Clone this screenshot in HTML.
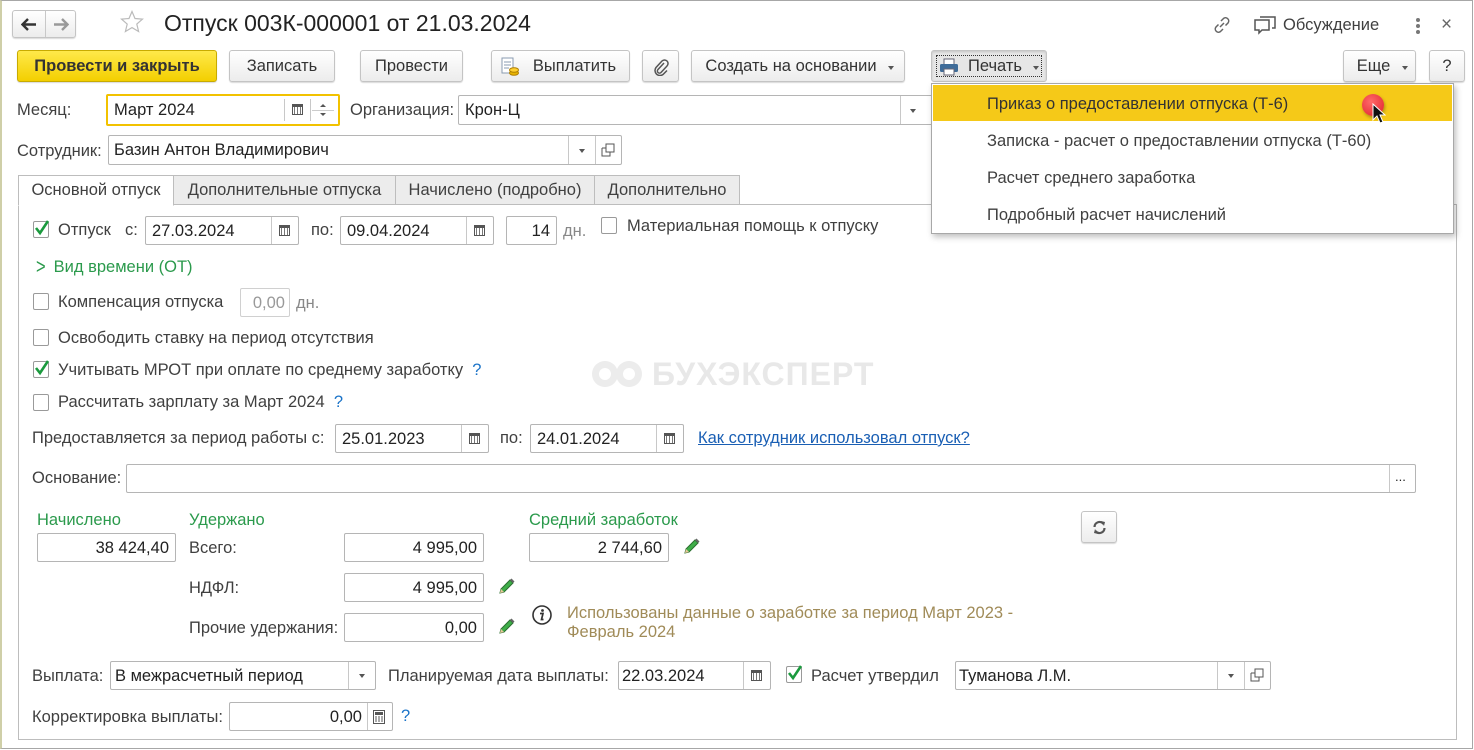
<!DOCTYPE html>
<html><head><meta charset="utf-8">
<style>
*{box-sizing:border-box;margin:0;padding:0}
body{width:1474px;height:750px;overflow:hidden;background:#fff;font-family:"Liberation Sans",Arial,sans-serif;font-size:16.5px;color:#404040;position:relative}
.a{position:absolute;white-space:nowrap;line-height:20px}
.f{position:absolute;border:1px solid #b5b5b5;border-radius:2px;background:#fff;font-size:16.5px;color:#222;line-height:28px;padding:0 6px;white-space:nowrap;overflow:hidden}
.r{text-align:right}
.btn{position:absolute;height:32px;border:1px solid #c4c4c4;border-radius:3px;background:linear-gradient(#fff,#ececec);box-shadow:0 1px 1px rgba(0,0,0,.15);text-align:center;line-height:31px;font-size:16.5px;color:#333;white-space:nowrap}
.sep{position:absolute;top:0;bottom:0;width:1px;background:#c8c8c8}
.cb{position:absolute;width:16px;height:17px;border:1px solid #9a9a9a;border-radius:2px;background:#fff}
.tri{position:absolute;width:0;height:0;border-left:3px solid transparent;border-right:3px solid transparent;border-top:4px solid #555}
.g{color:#2b9a4c}
.cal{position:absolute;width:11px;height:11px;border:1.5px solid #555;border-top-width:3px;background:repeating-linear-gradient(90deg,#fff 0 1px,#777 1px 2px,#fff 2px 3px)}
.tab{position:absolute;top:175px;height:30px;border:1px solid #bdbdbd;background:#ececec;line-height:29px;text-align:center;font-size:16.5px;color:#404040}
.q{color:#1a73c8}
</style></head><body>
<div style="position:absolute;left:0;top:0;width:1473px;height:749px;border:1px solid #a7a7a7;border-left:2px solid #cfcfa8"></div>

<div class="btn" style="left:12px;top:10px;width:64px;height:28px">
 <div class="sep" style="left:32px"></div>
 <svg style="position:absolute;left:8px;top:7px" width="16" height="13"><path d="M1 6.5h14M7 1L1.5 6.5 7 12" stroke="#333" stroke-width="2.4" fill="none"/></svg>
 <svg style="position:absolute;left:40px;top:7px" width="16" height="13"><path d="M1 6.5h14M9 1l5.5 5.5L9 12" stroke="#999" stroke-width="2.4" fill="none"/></svg>
</div>
<svg style="position:absolute;left:120px;top:10px" width="24" height="24"><path d="M12 1.5l3 7 7.5.6-5.7 5 1.8 7.4L12 17.6l-6.6 3.9 1.8-7.4-5.7-5 7.5-.6z" fill="none" stroke="#bbb" stroke-width="1.2"/></svg>
<div class="a" style="left:164px;top:9px;font-size:23px;line-height:28px;color:#222">Отпуск 003К-000001 от 21.03.2024</div>

<svg style="position:absolute;left:1211px;top:14px" width="22" height="22"><g fill="none" stroke="#666" stroke-width="1.5"><path d="M9 13l4-4"/><path d="M10 7l2.5-2.5a3.2 3.2 0 0 1 4.5 4.5L14.5 11.5"/><path d="M12 15l-2.5 2.5a3.2 3.2 0 0 1-4.5-4.5L7.5 10.5"/></g></svg>
<svg style="position:absolute;left:1253px;top:13px" width="24" height="22"><g fill="none" stroke="#555" stroke-width="1.5"><path d="M7 4h15v11h-3"/><path d="M2 7h14v10H9l-3 3v-3H2z" fill="#fff"/></g></svg>
<div class="a" style="left:1283px;top:15px;color:#404040">Обсуждение</div>
<div style="position:absolute;left:1416px;top:18px;width:4px;height:4px;border-radius:2px;background:#777;box-shadow:0 6px 0 #777,0 12px 0 #777"></div>
<div class="a" style="left:1441px;top:15px;font-size:19px;color:#666">×</div>

<div class="btn" style="left:17px;top:50px;width:200px;background:linear-gradient(#ffe94a,#f3cf00);border-color:#c8ab00;font-weight:bold;color:#333">Провести и закрыть</div>
<div class="btn" style="left:229px;top:50px;width:106px">Записать</div>
<div class="btn" style="left:360px;top:50px;width:103px">Провести</div>
<div class="btn" style="left:491px;top:50px;width:139px;padding-left:28px">Выплатить
 <svg style="position:absolute;left:9px;top:6px" width="18" height="20"><rect x="1" y="1" width="11" height="15" fill="#fff" stroke="#8a9bb0"/><path d="M3 5h7M3 8h7M3 11h5" stroke="#8a9bb0"/><ellipse cx="13" cy="16" rx="4.5" ry="2.3" fill="#e8b400" stroke="#b07f00"/><ellipse cx="13" cy="13" rx="4.5" ry="2.3" fill="#ffd030" stroke="#b07f00"/></svg></div>
<div class="btn" style="left:642px;top:50px;width:37px">
 <svg style="position:absolute;left:10px;top:7px" width="16" height="18"><path d="M11 5L5 11.5a2 2 0 0 0 3 3L14 8a3.5 3.5 0 0 0-5-5L3 9.5a5 5 0 0 0 7 7l4-4" fill="none" stroke="#555" stroke-width="1.5"/></svg></div>
<div class="btn" style="left:691px;top:50px;width:214px;padding-right:14px">Создать на основании<div class="tri" style="left:196px;top:15px"></div></div>
<div class="btn" style="left:931px;top:50px;width:116px;background:#e6e6e6;box-shadow:inset 0 1px 2px rgba(0,0,0,.15);padding-left:22px;padding-right:10px">
 <div style="position:absolute;left:4px;top:4px;right:4px;bottom:4px;border:1px dotted #333"></div>Печать<div class="tri" style="left:101px;top:15px"></div>
 <svg style="position:absolute;left:7px;top:7px" width="20" height="18"><rect x="5" y="1" width="10" height="6" fill="#fff" stroke="#667"/><rect x="1" y="6" width="18" height="8" rx="1.5" fill="#3f6c99"/><rect x="5" y="11" width="10" height="6" fill="#fff" stroke="#667"/></svg></div>
<div class="btn" style="left:1343px;top:50px;width:73px;padding-right:12px">Еще<div class="tri" style="left:58px;top:15px"></div></div>
<div class="btn" style="left:1429px;top:50px;width:36px">?</div>

<div class="a" style="left:17px;top:100px">Месяц:</div>
<div class="f" style="left:106px;top:94px;width:234px;height:32px;border:2px solid #f2c200;line-height:28px">Март 2024
 <div class="sep" style="left:176px;top:3px;bottom:3px"></div><div class="cal" style="left:184px;top:8px"></div>
 <div class="sep" style="left:202px;top:3px;bottom:3px"></div>
 <div class="tri" style="left:212px;top:8px;border-top:none;border-bottom:3px solid #555"></div><div class="tri" style="left:212px;top:17px;border-top-width:3px"></div>
 <div style="position:absolute;left:204px;right:4px;top:14px;height:1px;background:#ccc"></div></div>
<div class="a" style="left:350px;top:100px">Организация:</div>
<div class="f" style="left:458px;top:95px;width:480px;height:30px">Крон-Ц<div class="sep" style="left:441px"></div><div class="tri" style="left:451px;top:13px"></div></div>

<div class="a" style="left:17px;top:141px">Сотрудник:</div>
<div class="f" style="left:108px;top:135px;width:514px;height:30px;padding-left:5px">Базин Антон Владимирович<div class="sep" style="left:459px"></div><div class="tri" style="left:470px;top:13px"></div><div class="sep" style="left:486px"></div>
 <svg style="position:absolute;left:492px;top:7px" width="14" height="14"><path d="M5 1h8v8H5z" fill="#fff" stroke="#555"/><path d="M1 5h4M1 5v8h8V9" fill="none" stroke="#555"/></svg></div>

<div style="position:absolute;left:18px;top:204px;width:1439px;height:536px;border:1px solid #bdbdbd"></div>
<div class="tab" style="left:18px;width:156px;background:#fff;border-bottom-color:#fff;height:31px">Основной отпуск</div>
<div class="tab" style="left:173px;width:223px">Дополнительные отпуска</div>
<div class="tab" style="left:395px;width:200px">Начислено (подробно)</div>
<div class="tab" style="left:594px;width:146px">Дополнительно</div>

<svg style="position:absolute;left:588px;top:357px" width="60" height="34"><g fill="#ececec"><circle cx="17" cy="17" r="13"/><circle cx="41" cy="17" r="13"/></g><g fill="#fff"><circle cx="17" cy="17" r="6"/><circle cx="41" cy="17" r="6"/></g></svg>
<div class="a" style="left:652px;top:357px;font-size:32px;line-height:34px;font-weight:bold;color:#e8e8e8;letter-spacing:1px">БУХЭКСПЕРТ</div>

<svg width="0" height="0" style="position:absolute"><defs><path id="ck" d="M3 9l4 5 8-12" fill="none" stroke="#1b9a3e" stroke-width="2.6"/></defs></svg>
<div class="cb" style="left:33px;top:221px"><svg width="18" height="18" style="position:absolute;left:-1px;top:-3px"><use href="#ck"/></svg></div>
<div class="a" style="left:58px;top:220px">Отпуск</div><div class="a" style="left:125px;top:220px">с:</div>
<div class="f" style="left:145px;top:216px;width:154px;height:29px">27.03.2024<div class="sep" style="left:125px"></div><div class="cal" style="left:133px;top:8px"></div></div>
<div class="a" style="left:311px;top:220px">по:</div>
<div class="f" style="left:340px;top:216px;width:154px;height:29px">09.04.2024<div class="sep" style="left:125px"></div><div class="cal" style="left:133px;top:8px"></div></div>
<div class="f r" style="left:506px;top:216px;width:51px;height:29px">14</div>
<div class="a" style="left:563px;top:221px;color:#888">дн.</div>
<div class="cb" style="left:601px;top:217px"></div>
<div class="a" style="left:627px;top:216px">Материальная помощь к отпуску</div>

<div class="a g" style="left:36px;top:257px"><span style="display:inline-block;transform:scaleY(1.3);margin-right:8px">&gt;</span>Вид времени (ОТ)</div>

<div class="cb" style="left:33px;top:293px"></div>
<div class="a" style="left:58px;top:292px">Компенсация отпуска</div>
<div class="f r" style="left:240px;top:288px;width:50px;height:29px;color:#999;border-color:#d0d0d0;padding-right:4px">0,00</div>
<div class="a" style="left:296px;top:293px;color:#888">дн.</div>

<div class="cb" style="left:33px;top:329px"></div>
<div class="a" style="left:58px;top:328px">Освободить ставку на период отсутствия</div>
<div class="cb" style="left:33px;top:361px"><svg width="18" height="18" style="position:absolute;left:-1px;top:-3px"><use href="#ck"/></svg></div>
<div class="a" style="left:58px;top:360px">Учитывать МРОТ при оплате по среднему заработку <span class="q">&nbsp;?</span></div>
<div class="cb" style="left:33px;top:394px"></div>
<div class="a" style="left:58px;top:392px">Рассчитать зарплату за Март 2024 <span class="q">&nbsp;?</span></div>

<div class="a" style="left:32px;top:428px">Предоставляется за период работы с:</div>
<div class="f" style="left:335px;top:424px;width:154px;height:29px">25.01.2023<div class="sep" style="left:125px"></div><div class="cal" style="left:133px;top:8px"></div></div>
<div class="a" style="left:500px;top:428px">по:</div>
<div class="f" style="left:530px;top:424px;width:154px;height:29px">24.01.2024<div class="sep" style="left:125px"></div><div class="cal" style="left:133px;top:8px"></div></div>
<div class="a" style="left:698px;top:428px;color:#1a5fb4;text-decoration:underline">Как сотрудник использовал отпуск?</div>

<div class="a" style="left:32px;top:468px">Основание:</div>
<div class="f" style="left:126px;top:464px;width:1290px;height:29px"><div class="sep" style="left:1262px"></div><div class="a" style="left:1268px;top:2px;font-size:13px">...</div></div>

<div class="a g" style="left:37px;top:510px">Начислено</div>
<div class="a g" style="left:189px;top:510px">Удержано</div>
<div class="a g" style="left:529px;top:510px">Средний заработок</div>
<div class="f r" style="left:37px;top:533px;width:139px;height:29px">38 424,40</div>
<div class="a" style="left:189px;top:538px">Всего:</div>
<div class="f r" style="left:344px;top:533px;width:140px;height:29px">4 995,00</div>
<div class="f r" style="left:529px;top:533px;width:140px;height:29px">2 744,60</div>
<div class="a" style="left:189px;top:578px">НДФЛ:</div>
<div class="f r" style="left:344px;top:573px;width:140px;height:29px">4 995,00</div>
<div class="a" style="left:189px;top:618px">Прочие удержания:</div>
<div class="f r" style="left:344px;top:613px;width:140px;height:29px">0,00</div>
<svg width="0" height="0" style="position:absolute"><defs><g id="pn"><path d="M13 2l3 3-9 9-4 1 1-4z" fill="#3fae49" stroke="#2a6e2f"/><path d="M13 2l3 3 1.5-1.5-3-3z" fill="#666"/><path d="M3 15l1-4 3 3z" fill="#e8c89a"/></g></defs></svg>
<svg style="position:absolute;left:682px;top:538px" width="20" height="18"><use href="#pn"/></svg>
<svg style="position:absolute;left:497px;top:578px" width="20" height="18"><use href="#pn"/></svg>
<svg style="position:absolute;left:497px;top:618px" width="20" height="18"><use href="#pn"/></svg>
<div class="btn" style="left:1081px;top:511px;width:36px;height:32px">
 <svg style="position:absolute;left:10px;top:8px" width="15" height="15"><g fill="none" stroke="#555" stroke-width="2.2"><path d="M2.5 7a5 5 0 0 1 9-3"/><path d="M12.5 8a5 5 0 0 1-9 3"/></g><path d="M9 1l4 1-1 4z M6 14l-4-1 1-4z" fill="#555"/></svg></div>

<svg style="position:absolute;left:531px;top:604px" width="22" height="22"><circle cx="11" cy="11" r="9" fill="none" stroke="#333" stroke-width="1.6"/><circle cx="11.5" cy="6.5" r="1.4" fill="#333"/><path d="M9 9.5h3l-1.5 6h2" fill="none" stroke="#333" stroke-width="1.7"/></svg>
<div class="a" style="left:567px;top:603px;color:#a08b58">Использованы данные о заработке за период Март 2023 -</div>
<div class="a" style="left:567px;top:622px;color:#a08b58">Февраль 2024</div>

<div class="a" style="left:32px;top:666px">Выплата:</div>
<div class="f" style="left:110px;top:661px;width:266px;height:29px;padding-left:4px">В межрасчетный период<div class="sep" style="left:237px"></div><div class="tri" style="left:248px;top:12px"></div></div>
<div class="a" style="left:388px;top:666px">Планируемая дата выплаты:</div>
<div class="f" style="left:618px;top:661px;width:153px;height:29px;padding-left:3px">22.03.2024<div class="sep" style="left:124px"></div><div class="cal" style="left:132px;top:8px"></div></div>
<div class="cb" style="left:786px;top:666px"><svg width="18" height="18" style="position:absolute;left:-1px;top:-3px"><use href="#ck"/></svg></div>
<div class="a" style="left:811px;top:666px">Расчет утвердил</div>
<div class="f" style="left:955px;top:661px;width:316px;height:29px;padding-left:3px">Туманова Л.М.<div class="sep" style="left:261px"></div><div class="tri" style="left:272px;top:12px"></div><div class="sep" style="left:288px"></div>
 <svg style="position:absolute;left:294px;top:6px" width="14" height="14"><path d="M5 1h8v8H5z" fill="#fff" stroke="#555"/><path d="M1 5h4M1 5v8h8V9" fill="none" stroke="#555"/></svg></div>

<div class="a" style="left:32px;top:707px">Корректировка выплаты:</div>
<div class="f r" style="left:229px;top:702px;width:164px;height:29px;padding-right:30px">0,00<div class="sep" style="left:137px"></div>
 <svg style="position:absolute;left:143px;top:7px" width="12" height="14"><rect x=".5" y=".5" width="11" height="13" fill="#fff" stroke="#555"/><rect x="2" y="2" width="8" height="3" fill="#555"/><path d="M2 7h2M5 7h2M8 7h2M2 9h2M5 9h2M8 9h2M2 11h2M5 11h2M8 11h2" stroke="#555"/></svg></div>
<div class="a q" style="left:401px;top:706px">?</div>

<div style="position:absolute;left:931px;top:83px;width:523px;height:151px;background:#fff;border:1px solid #a8a8a8;box-shadow:2px 3px 6px rgba(0,0,0,.25)">
 <div style="position:absolute;left:1px;top:1px;right:1px;height:36px;background:#f5c918"></div>
 <div class="a" style="left:55px;top:10px;color:#333">Приказ о предоставлении отпуска (Т-6)</div>
 <div class="a" style="left:55px;top:47px">Записка - расчет о предоставлении отпуска (Т-60)</div>
 <div class="a" style="left:55px;top:84px">Расчет среднего заработка</div>
 <div class="a" style="left:55px;top:121px">Подробный расчет начислений</div>
 <div style="position:absolute;left:430px;top:10px;width:22px;height:22px;border-radius:50%;background:radial-gradient(circle at 40% 35%,#ff6a6a,#e0202a);box-shadow:1px 2px 3px rgba(0,0,0,.3)"></div>
 <svg style="position:absolute;left:440px;top:19px" width="14" height="22"><path d="M1 1v16l4-4 3 7 3-1-3-7h5z" fill="#111" stroke="#fff" stroke-width="1"/></svg>
</div>
</body></html>
